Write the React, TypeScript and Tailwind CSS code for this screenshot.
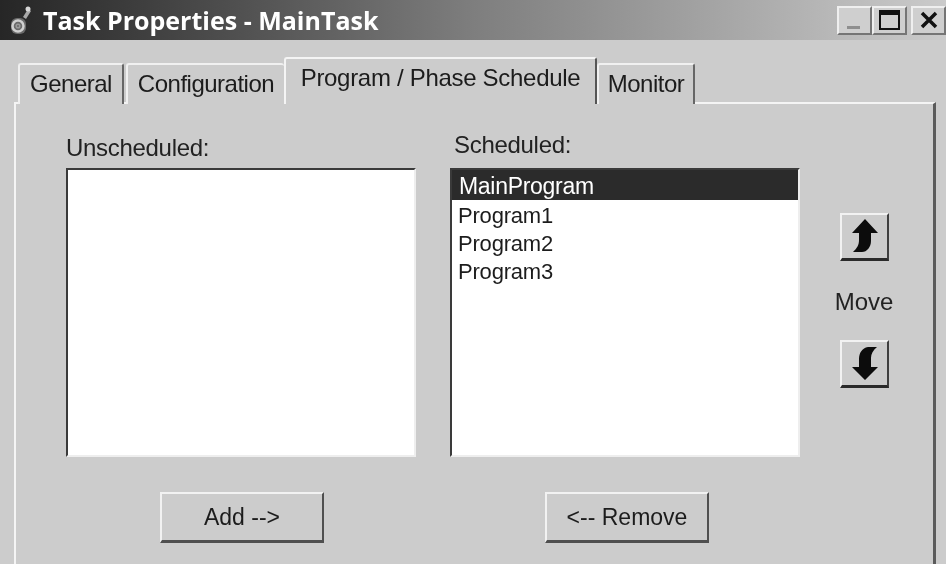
const font = "font-['Liberation_Sans',Arial,sans-serif]";

function AppIcon() {
  return (
    <svg width="22" height="30" viewBox="0 0 22 30" className="shrink-0">
      <path d="M14 12l5-8 3 2-5 8z" fill="#a8a8a8" />
      <circle cx="19" cy="4" r="2.5" fill="#d8d8d8" />
      <rect x="2" y="13" width="15" height="16" rx="6" fill="#6a6a6a" />
      <circle cx="9" cy="21" r="5.5" fill="none" stroke="#d0d0d0" strokeWidth="2.5" />
      <circle cx="9" cy="21" r="1.8" fill="none" stroke="#9a9a9a" strokeWidth="1.5" />
    </svg>
  );
}

function WinButton({ children }: { children: React.ReactNode }) {
  return (
    <div className="w-[35px] h-[29px] flex items-center justify-center bg-[#cfcfcf] border-t-2 border-l-2 border-t-[#efefef] border-l-[#efefef] border-b-2 border-r-2 border-b-[#757575] border-r-[#757575]">
      {children}
    </div>
  );
}

function Tab({ label, width, active, noRight }: { label: string; width: string; active?: boolean; noRight?: boolean }) {
  return (
    <div
      className={
        active
          ? `${width} h-[47px] pb-[7px] relative z-10 flex items-center justify-center bg-[#cccccc] border-t-2 border-l-2 border-t-[#f4f4f4] border-l-[#f4f4f4] border-r-2 border-r-[#555555] rounded-t-[3px]`
          : `${width} h-[41px] pb-[2px] flex items-center justify-center bg-[#cccccc] border-t-2 border-l-2 border-t-[#f0f0f0] border-l-[#f0f0f0] rounded-t-[3px] ${noRight ? "" : "border-r-2 border-r-[#666666]"}`
      }
    >
      <span className={`text-[24px] leading-none text-[#1c1c1c] ${active ? "tracking-[-0.3px]" : "tracking-[-0.5px]"}`}>{label}</span>
    </div>
  );
}

function ListBox({ items }: { items: string[] }) {
  return (
    <div className="w-[350px] h-[289px] bg-white border-t-2 border-l-2 border-t-[#3a3a3a] border-l-[#3a3a3a] border-r-2 border-b-2 border-r-[#eeeeee] border-b-[#eeeeee] flex flex-col">
      {items.map((item, i) => (
        <div
          key={item}
          className={
            i === 0
              ? "h-[30px] pl-[7px] bg-[#2b2b2b] text-white text-[23px] tracking-[-0.3px] leading-[33px]"
              : "h-[28px] pl-[6px] text-[#1c1c1c] text-[22px] tracking-[-0.2px] leading-[32px]"
          }
        >
          {item}
        </div>
      ))}
    </div>
  );
}

function PushButton({ label, className }: { label: string; className: string }) {
  return (
    <button className={`w-[164px] h-[51px] bg-[#cccccc] border-t-2 border-l-2 border-t-[#f2f2f2] border-l-[#f2f2f2] border-r-2 border-b-[3px] border-r-[#4f4f4f] border-b-[#4f4f4f] text-[23px] text-[#1c1c1c] leading-none ${className}`}>
      {label}
    </button>
  );
}

function ArrowButton({ d }: { d: string }) {
  return (
    <div className="w-[49px] h-[48px] bg-[#cccccc] border-t-2 border-l-2 border-t-[#f2f2f2] border-l-[#f2f2f2] border-r-2 border-b-[3px] border-r-[#3f3f3f] border-b-[#2a2a2a]">
      <svg width="45" height="43" viewBox="2 2 45 43">
        <path d={d} fill="#0c0c0c" />
      </svg>
    </div>
  );
}

export default function App() {
  return (
    <div className={`w-[946px] h-[564px] overflow-hidden bg-[#cccccc] flex flex-col blur-[0.5px] ${font}`}>
      {/* title bar */}
      <div className="h-10 shrink-0 flex items-center pl-[9px] bg-gradient-to-r from-[#262626] via-[#7e7e7e] to-[#cbcbcb]">
        <AppIcon />
        <span className="ml-[12px] text-[25px] font-bold text-white leading-none font-['Open_Sans',sans-serif]">Task Properties - MainTask</span>
        <div className="ml-auto flex">
          <WinButton><div className="w-[13px] h-[3px] mt-[14px] -ml-[2px] bg-[#8f8f8f]" /></WinButton>
          <WinButton><div className="w-[21px] h-[20px] border-2 border-t-[5px] border-[#111111]" /></WinButton>
          <div className="w-[4px]" />
          <WinButton>
            <svg width="20" height="18" viewBox="0 0 20 18"><path d="M3 2l14 14M17 2L3 16" stroke="#111111" strokeWidth="3.5" /></svg>
          </WinButton>
        </div>
      </div>

      {/* tabs */}
      <div className="h-[47px] mt-[17px] -mb-[2px] shrink-0 flex items-end pl-[18px] relative z-10">
        <Tab label="General" width="w-[106px]" />
        <div className="w-[2px]" />
        <Tab label="Configuration" width="w-[158px]" noRight />
        <Tab label="Program / Phase Schedule" width="w-[313px]" active />
        <Tab label="Monitor" width="w-[98px]" />
      </div>

      {/* tab panel */}
      <div className="ml-[14px] w-[922px] flex-1 flex pl-[50px] border-t-2 border-l-2 border-t-[#f4f4f4] border-l-[#f4f4f4] border-r-[3px] border-r-[#5a5a5a]">
        <div className="w-[350px] flex flex-col">
          <div className="h-[28px] mt-[30px] mb-[6px] text-[24px] tracking-[-0.3px] leading-[28px] text-[#222222]">Unscheduled:</div>
          <ListBox items={[]} />
          <PushButton label="Add -->" className="mt-[35px] ml-[94px]" />
        </div>
        <div className="w-[350px] ml-[34px] flex flex-col">
          <div className="h-[28px] mt-[27px] mb-[9px] ml-[4px] text-[24px] tracking-[-0.3px] leading-[28px] text-[#222222]">Scheduled:</div>
          <ListBox items={["MainProgram", "Program1", "Program2", "Program3"]} />
          <PushButton label="<-- Remove" className="mt-[35px] ml-[95px]" />
        </div>
        <div className="w-[128px] flex flex-col items-center pt-[109px]">
          <ArrowButton d="M25 6L38 20H31V28C31 34 27 39 22 39H13C17 35 19 32 19 27V20H12Z" />
          <div className="h-[79px] pt-[2px] flex items-center text-[24px] text-[#222222]">Move</div>
          <ArrowButton d="M25 40L38 27H31V18C31 14 33 10 37 7H28C22 8 19 13 19 19V27H12Z" />
        </div>
      </div>
    </div>
  );
}
